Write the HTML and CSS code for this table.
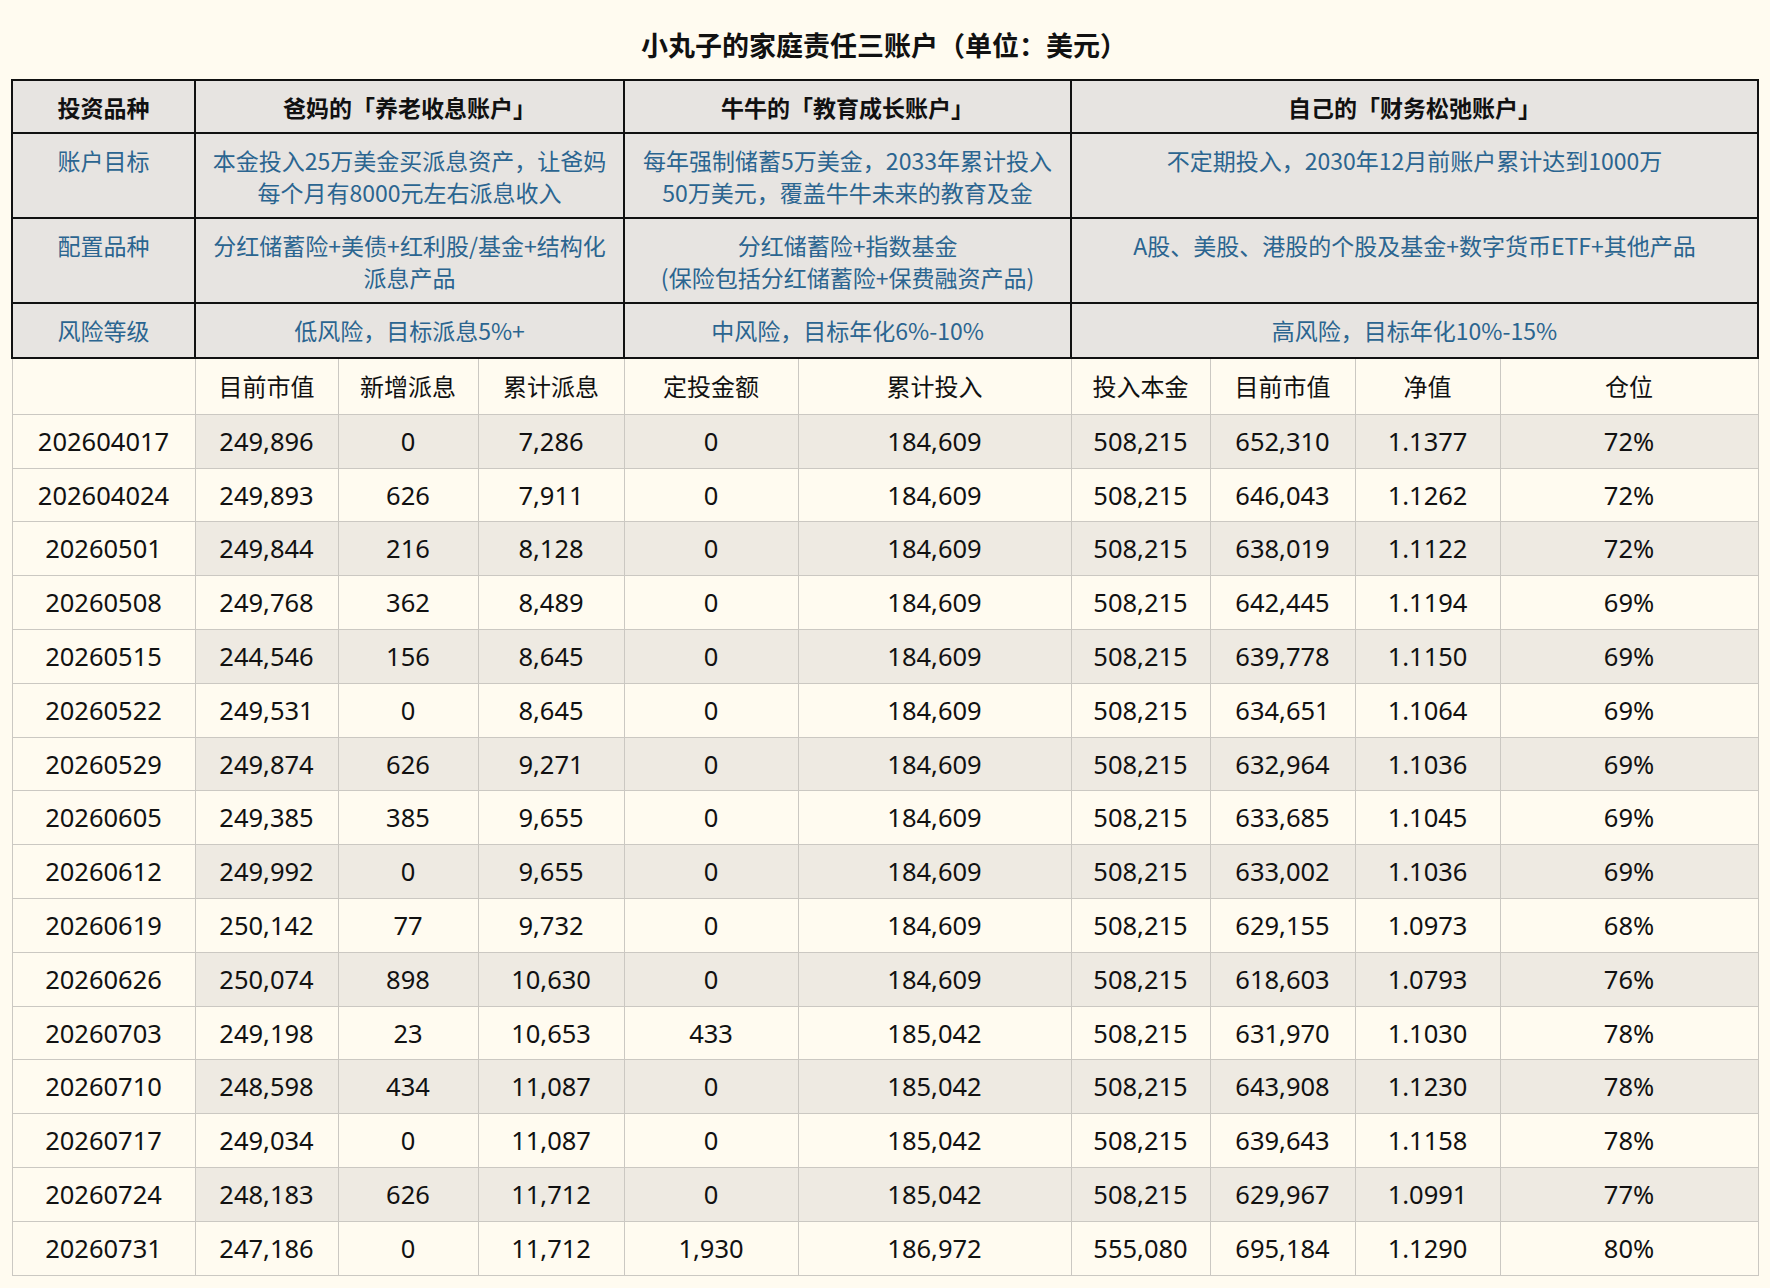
FILE: index.html
```html
<!DOCTYPE html>
<html lang="zh-CN">
<head>
<meta charset="utf-8">
<title>小丸子的家庭责任三账户</title>
<link rel="stylesheet" href="styles.css">
</head>
<body>
<div class="page">
  <h1 class="title">小丸子的家庭责任三账户（单位：美元）</h1>
  <table class="sheet">
    <colgroup>
      <col class="c1"><col class="c2"><col class="c3"><col class="c4"><col class="c5">
      <col class="c6"><col class="c7"><col class="c8"><col class="c9"><col class="c10">
    </colgroup>
    <tbody class="summary">
      <tr class="head">
        <th>投资品种</th>
        <th colspan="3">爸妈的「养老收息账户」</th>
        <th colspan="2">牛牛的「教育成长账户」</th>
        <th colspan="4">自己的「财务松弛账户」</th>
      </tr>
      <tr>
        <td>账户目标</td>
        <td colspan="3">本金投入25万美金买派息资产，让爸妈每个月有8000元左右派息收入</td>
        <td colspan="2">每年强制储蓄5万美金，2033年累计投入50万美元，覆盖牛牛未来的教育及金</td>
        <td colspan="4">不定期投入，2030年12月前账户累计达到1000万</td>
      </tr>
      <tr>
        <td>配置品种</td>
        <td colspan="3">分红储蓄险+美债+红利股/基金+结构化派息产品</td>
        <td colspan="2">分红储蓄险+指数基金<br>(保险包括分红储蓄险+保费融资产品)</td>
        <td colspan="4">A股、美股、港股的个股及基金+数字货币ETF+其他产品</td>
      </tr>
      <tr class="risk">
        <td>风险等级</td>
        <td colspan="3">低风险，目标派息5%+</td>
        <td colspan="2">中风险，目标年化6%-10%</td>
        <td colspan="4">高风险，目标年化10%-15%</td>
      </tr>
    </tbody>
    <tbody class="data">
      <tr class="dhead">
        <th></th><th>目前市值</th><th>新增派息</th><th>累计派息</th><th>定投金额</th>
        <th>累计投入</th><th>投入本金</th><th>目前市值</th><th>净值</th><th>仓位</th>
      </tr>
      <tr class="alt"><td>202604017</td><td>249,896</td><td>0</td><td>7,286</td><td>0</td><td>184,609</td><td>508,215</td><td>652,310</td><td>1.1377</td><td>72%</td></tr>
      <tr><td>202604024</td><td>249,893</td><td>626</td><td>7,911</td><td>0</td><td>184,609</td><td>508,215</td><td>646,043</td><td>1.1262</td><td>72%</td></tr>
      <tr class="alt"><td>20260501</td><td>249,844</td><td>216</td><td>8,128</td><td>0</td><td>184,609</td><td>508,215</td><td>638,019</td><td>1.1122</td><td>72%</td></tr>
      <tr><td>20260508</td><td>249,768</td><td>362</td><td>8,489</td><td>0</td><td>184,609</td><td>508,215</td><td>642,445</td><td>1.1194</td><td>69%</td></tr>
      <tr class="alt"><td>20260515</td><td>244,546</td><td>156</td><td>8,645</td><td>0</td><td>184,609</td><td>508,215</td><td>639,778</td><td>1.1150</td><td>69%</td></tr>
      <tr><td>20260522</td><td>249,531</td><td>0</td><td>8,645</td><td>0</td><td>184,609</td><td>508,215</td><td>634,651</td><td>1.1064</td><td>69%</td></tr>
      <tr class="alt"><td>20260529</td><td>249,874</td><td>626</td><td>9,271</td><td>0</td><td>184,609</td><td>508,215</td><td>632,964</td><td>1.1036</td><td>69%</td></tr>
      <tr><td>20260605</td><td>249,385</td><td>385</td><td>9,655</td><td>0</td><td>184,609</td><td>508,215</td><td>633,685</td><td>1.1045</td><td>69%</td></tr>
      <tr class="alt"><td>20260612</td><td>249,992</td><td>0</td><td>9,655</td><td>0</td><td>184,609</td><td>508,215</td><td>633,002</td><td>1.1036</td><td>69%</td></tr>
      <tr><td>20260619</td><td>250,142</td><td>77</td><td>9,732</td><td>0</td><td>184,609</td><td>508,215</td><td>629,155</td><td>1.0973</td><td>68%</td></tr>
      <tr class="alt"><td>20260626</td><td>250,074</td><td>898</td><td>10,630</td><td>0</td><td>184,609</td><td>508,215</td><td>618,603</td><td>1.0793</td><td>76%</td></tr>
      <tr><td>20260703</td><td>249,198</td><td>23</td><td>10,653</td><td>433</td><td>185,042</td><td>508,215</td><td>631,970</td><td>1.1030</td><td>78%</td></tr>
      <tr class="alt"><td>20260710</td><td>248,598</td><td>434</td><td>11,087</td><td>0</td><td>185,042</td><td>508,215</td><td>643,908</td><td>1.1230</td><td>78%</td></tr>
      <tr><td>20260717</td><td>249,034</td><td>0</td><td>11,087</td><td>0</td><td>185,042</td><td>508,215</td><td>639,643</td><td>1.1158</td><td>78%</td></tr>
      <tr class="alt"><td>20260724</td><td>248,183</td><td>626</td><td>11,712</td><td>0</td><td>185,042</td><td>508,215</td><td>629,967</td><td>1.0991</td><td>77%</td></tr>
      <tr><td>20260731</td><td>247,186</td><td>0</td><td>11,712</td><td>1,930</td><td>186,972</td><td>555,080</td><td>695,184</td><td>1.1290</td><td>80%</td></tr>
    </tbody>
  </table>
</div>
</body>
</html>
```
FILE: styles.css
```css
html, body {
  margin: 0;
  padding: 0;
  background: #fffbf0;
}

.page {
  padding: 26px 13px 0 11px;
  font-family: "Noto Sans", "Noto Sans CJK SC", sans-serif;
  color: #111;
}

.title {
  margin: 0 0 16px;
  font-family: "Noto Sans CJK SC", sans-serif;
  font-size: 27px;
  line-height: 37px;
  font-weight: 700;
  text-align: center;
  color: #111;
}

.sheet {
  width: 1746px;
  table-layout: fixed;
  border-collapse: collapse;
}

.c1 { width: 183px; }
.c2 { width: 143px; }
.c3 { width: 140px; }
.c4 { width: 146px; }
.c5 { width: 174px; }
.c6 { width: 273px; }
.c7 { width: 139px; }
.c8 { width: 145px; }
.c9 { width: 145px; }
.c10 { width: 258px; }

.summary th,
.summary td {
  background: #e7e4e1;
  border: 2px solid #111;
  padding: 10px 10px 9px;
  font-family: "Noto Sans CJK SC", sans-serif;
  font-size: 23px;
  line-height: 32px;
  text-align: center;
  vertical-align: top;
}

.summary th {
  font-weight: 700;
  color: #111;
}

.summary td {
  font-weight: 400;
  color: #2b6590;
}

.summary .risk td {
  padding-bottom: 11px;
}

.data th,
.data td {
  border: 1px solid #cbc8c2;
  padding: 10px 6px;
  font-size: 25.5px;
  line-height: 32.8px;
  text-align: center;
  vertical-align: middle;
  font-weight: 400;
  color: #111;
  white-space: nowrap;
}

.data .dhead th {
  border-top: 2px solid #111;
  padding: 11px 6px;
  font-family: "Noto Sans CJK SC", sans-serif;
  font-size: 24px;
}

.data tr.alt td {
  background: #eeeae2;
}

.data tr.alt td:first-child {
  background: #fffbf0;
}
```
